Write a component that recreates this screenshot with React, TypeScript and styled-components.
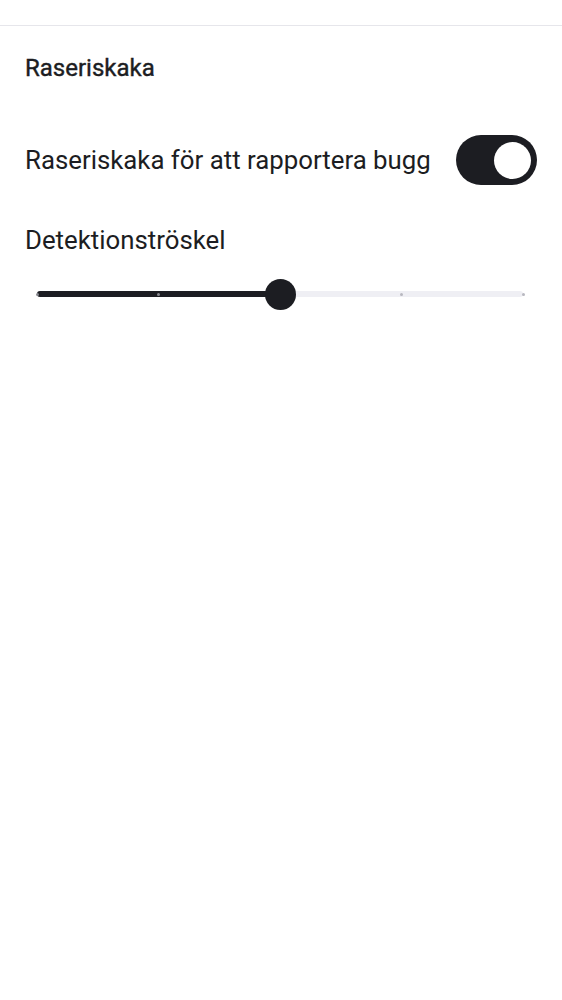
import React, { useState } from "react"
import styled, { createGlobalStyle } from "styled-components"

const GlobalStyle = createGlobalStyle`
  html, body {
    margin: 0;
    padding: 0;
    background: #ffffff;
    font-family: Roboto, "Noto Sans", sans-serif;
    color: #1c1d22;
  }
`

const TICKS = [0, 0.25, 0.5, 0.75, 1]

export default function App() {
  const [enabled, setEnabled] = useState(true)
  const [threshold, setThreshold] = useState(0.5)

  return (
    <>
      <GlobalStyle />
      <S.Page>
        <S.TopBar />
        <S.Content>
          <S.SectionTitle>Raseriskaka</S.SectionTitle>

          <S.Row>
            <S.RowText>Raseriskaka för att rapportera bugg</S.RowText>
            <S.Switch on={enabled} onClick={() => setEnabled(!enabled)}>
              <S.Thumb />
            </S.Switch>
          </S.Row>

          <S.Label>Detektionströskel</S.Label>
          <S.SliderWrap>
            <S.Track>
              <S.Fill style={{ width: `${threshold * 100}%` }} />
              {TICKS.map((t) => (
                <S.Tick key={t} active={t <= threshold} style={{ left: `${t * 100}%` }} onClick={() => setThreshold(t)} />
              ))}
              <S.Knob style={{ left: `${threshold * 100}%` }} />
            </S.Track>
          </S.SliderWrap>
        </S.Content>
      </S.Page>
    </>
  )
}

const S = {
  Page: styled.div`
    display: flex;
    flex-direction: column;
    min-height: 1000px;
  `,
  TopBar: styled.div`
    height: 25px;
    border-bottom: 1px solid #e6e6eb;
  `,
  Content: styled.div`
    display: flex;
    flex-direction: column;
    padding: 0 25px;
  `,
  SectionTitle: styled.div`
    margin-top: 27px;
    height: 30px;
    line-height: 30px;
    font-size: 24px;
    font-weight: 400;
    -webkit-text-stroke: 0.4px currentColor;
  `,
  Row: styled.div`
    display: flex;
    align-items: center;
    justify-content: space-between;
    margin-top: 52px;
    height: 50px;
  `,
  RowText: styled.div`
    font-size: 25.8px;
  `,
  Switch: styled.div<{ on: boolean }>`
    display: flex;
    align-items: center;
    width: 81px;
    height: 50px;
    border-radius: 25px;
    box-sizing: border-box;
    padding: 0 6px;
    background: ${(p) => (p.on ? "#1c1d22" : "#e3e3e8")};
    justify-content: ${(p) => (p.on ? "flex-end" : "flex-start")};
    cursor: pointer;
  `,
  Thumb: styled.div`
    width: 37px;
    height: 37px;
    border-radius: 50%;
    background: #ffffff;
  `,
  Label: styled.div`
    margin-top: 40px;
    height: 30px;
    line-height: 30px;
    font-size: 25.8px;
  `,
  SliderWrap: styled.div`
    display: flex;
    align-items: center;
    margin-top: 24px;
    height: 30px;
    padding: 0 14px 0 12px;
  `,
  Track: styled.div`
    position: relative;
    flex: 1;
    height: 6px;
    border-radius: 3px;
    background: #efeff4;
  `,
  Fill: styled.div`
    height: 100%;
    border-radius: 3px;
    background: #1c1d22;
  `,
  Tick: styled.div<{ active: boolean }>`
    position: absolute;
    top: 50%;
    width: 3px;
    height: 3px;
    margin: -1.5px 0 0 -1.5px;
    border-radius: 50%;
    background: ${(p) => (p.active ? "#8a8a90" : "#b8b8c0")};
  `,
  Knob: styled.div`
    position: absolute;
    top: 50%;
    width: 31px;
    height: 31px;
    margin: -15.5px 0 0 -15.5px;
    border-radius: 50%;
    background: #1c1d22;
  `,
}
